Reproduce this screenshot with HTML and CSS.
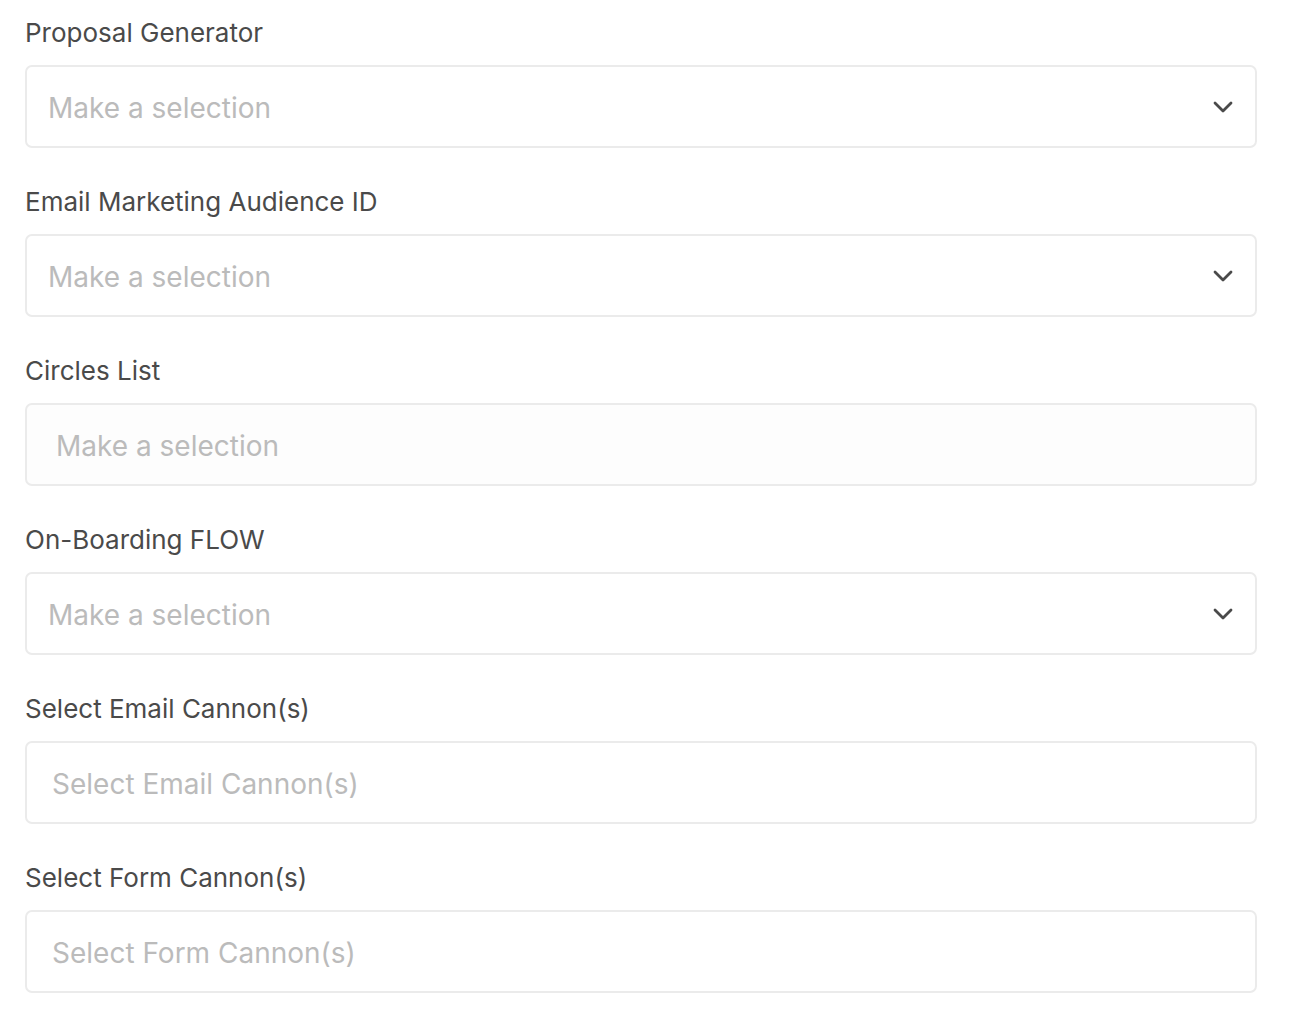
FILE: index.html
```html
<!DOCTYPE html>
<html>
<head>
<meta charset="utf-8">
<link rel="stylesheet" href="styles.css">
</head>
<body>
<form class="form">
  <div class="field">
    <label class="label">Proposal Generator</label>
    <div class="select">
      <span class="placeholder">Make a selection</span>
      <svg class="chev" viewBox="0 0 20 12" width="20" height="12"><path d="M2 2 L10 10 L18 2" fill="none" stroke="#4a4a4a" stroke-width="2.8" stroke-linecap="round" stroke-linejoin="round"/></svg>
    </div>
  </div>
  <div class="field">
    <label class="label">Email Marketing Audience ID</label>
    <div class="select">
      <span class="placeholder">Make a selection</span>
      <svg class="chev" viewBox="0 0 20 12" width="20" height="12"><path d="M2 2 L10 10 L18 2" fill="none" stroke="#4a4a4a" stroke-width="2.8" stroke-linecap="round" stroke-linejoin="round"/></svg>
    </div>
  </div>
  <div class="field">
    <label class="label">Circles List</label>
    <div class="select disabled">
      <span class="placeholder">Make a selection</span>
    </div>
  </div>
  <div class="field">
    <label class="label">On-Boarding FLOW</label>
    <div class="select">
      <span class="placeholder">Make a selection</span>
      <svg class="chev" viewBox="0 0 20 12" width="20" height="12"><path d="M2 2 L10 10 L18 2" fill="none" stroke="#4a4a4a" stroke-width="2.8" stroke-linecap="round" stroke-linejoin="round"/></svg>
    </div>
  </div>
  <div class="field">
    <label class="label">Select Email Cannon(s)</label>
    <div class="select multi">
      <span class="placeholder">Select Email Cannon(s)</span>
    </div>
  </div>
  <div class="field">
    <label class="label">Select Form Cannon(s)</label>
    <div class="select multi">
      <span class="placeholder">Select Form Cannon(s)</span>
    </div>
  </div>
</form>
</body>
</html>
```
FILE: styles.css
```css
html, body {
  margin: 0;
  padding: 0;
  background: #ffffff;
}
body {
  font-family: Inter, "Noto Sans", sans-serif;
}
.form {
  display: flex;
  flex-direction: column;
  gap: 38px;
  padding: 17px 41px 0 25px;
}
.field {
  display: flex;
  flex-direction: column;
  gap: 16px;
}
.label {
  font-size: 26px;
  line-height: 32px;
  color: #4a4a4a;
}
.select {
  box-sizing: border-box;
  height: 83px;
  border: 2px solid #ebebeb;
  border-radius: 7px;
  background: #ffffff;
  display: flex;
  align-items: center;
  justify-content: space-between;
  padding: 0 22px 0 21px;
}
.select.disabled {
  background: #fdfdfd;
  padding-left: 29px;
}
.select.multi {
  padding-left: 25px;
}
.placeholder {
  font-size: 28px;
  color: #bbbbbb;
  padding-top: 3px;
}
.chev {
  display: block;
}
```
